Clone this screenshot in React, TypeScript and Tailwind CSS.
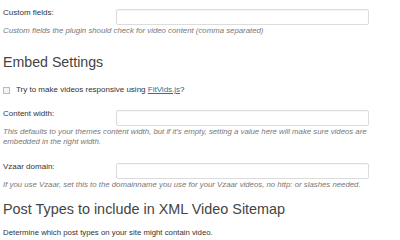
const FONT = "font-['Liberation_Sans',Arial,sans-serif]"

function TextInput() {
  return (
    <div className="mt-[1px] h-[16px] w-[253px] rounded-[2px] border border-[#dcdcdc] bg-white shadow-[inset_0_1px_1px_rgba(0,0,0,0.04)]" />
  )
}

function FieldRow({ label }: { label: string }) {
  return (
    <div className="flex items-start">
      <div className="w-[113px] text-[8px] leading-[9px] text-[#333]">{label}</div>
      <TextInput />
    </div>
  )
}

function Desc({ children }: { children: React.ReactNode }) {
  return <p className="mt-[1px] w-[372px] text-[7.8px] italic leading-[10px] text-[#777]">{children}</p>
}

export default function App() {
  return (
    <div className={`${FONT} min-h-[240px] w-[400px] overflow-hidden bg-white px-[3px] pt-[8px]`}>
      <FieldRow label="Custom fields:" />
      <Desc>Custom fields the plugin should check for video content (comma separated)</Desc>

      <h2 className="mt-[18px] text-[14.2px] leading-[16px] text-[#444]">Embed Settings</h2>

      <label className="mt-[15px] flex items-center gap-[6px] text-[8px] leading-[10px] text-[#333]">
        <span className="h-[7px] w-[7px] border border-[#bbb] bg-[#f4f4f4]" />
        <span>
          Try to make videos responsive using{' '}
          <a className="text-[#21759b] underline">FitVids.js</a>?
        </span>
      </label>

      <div className="mt-[14px]">
        <FieldRow label="Content width:" />
      </div>
      <Desc>
        This defaults to your themes content width, but if it's empty, setting a value here will make sure videos are
        <br />
        embedded in the right width.
      </Desc>

      <div className="mt-[15px]">
        <FieldRow label="Vzaar domain:" />
      </div>
      <Desc>If you use Vzaar, set this to the domainname you use for your Vzaar videos, no http: or slashes needed.</Desc>

      <h2 className="mt-[11px] text-[14.4px] leading-[16px] text-[#444]">Post Types to include in XML Video Sitemap</h2>

      <p className="mt-[11px] text-[7.8px] leading-[10px] text-[#333]">
        Determine which post types on your site might contain video.
      </p>
    </div>
  )
}
